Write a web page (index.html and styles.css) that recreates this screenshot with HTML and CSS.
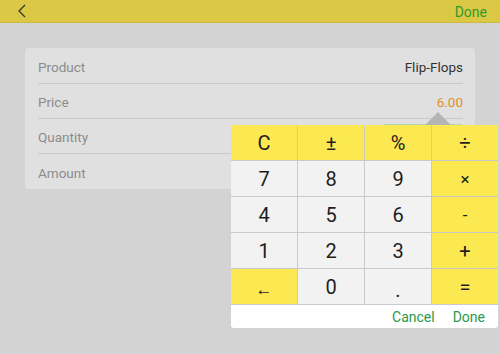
FILE: index.html
```html
<!DOCTYPE html>
<html>
  <head>
    <meta charset="utf-8" />
    <link rel="stylesheet" href="styles.css">
  </head>
  <body>
    <div class="header">
      <svg class="back" width="10" height="14" viewBox="0 0 10 14">
        <polyline points="8,1 2,7 8,13" fill="none" stroke="#333" stroke-width="1.3" />
      </svg>
      <div class="header-done">Done</div>
    </div>

    <div class="card">
      <div class="row">
        <span class="label">Product</span>
        <span class="value">Flip-Flops</span>
      </div>
      <div class="row">
        <span class="label">Price</span>
        <span class="value active">6.00</span>
      </div>
      <div class="row">
        <span class="label">Quantity</span>
        <span class="qty-field"></span>
      </div>
      <div class="row">
        <span class="label">Amount</span>
      </div>
    </div>

    <div class="calc-arrow"></div>
    <div class="calc">
      <div class="keys">
        <div class="key op">C</div>
        <div class="key op">±</div>
        <div class="key op">%</div>
        <div class="key op">÷</div>
        <div class="key">7</div>
        <div class="key">8</div>
        <div class="key">9</div>
        <div class="key op small">×</div>
        <div class="key">4</div>
        <div class="key">5</div>
        <div class="key">6</div>
        <div class="key op small">-</div>
        <div class="key">1</div>
        <div class="key">2</div>
        <div class="key">3</div>
        <div class="key op">+</div>
        <div class="key op small low">←</div>
        <div class="key">0</div>
        <div class="key low">.</div>
        <div class="key op">=</div>
      </div>
      <div class="calc-footer">
        <span class="calc-btn">Cancel</span>
        <span class="calc-btn">Done</span>
      </div>
    </div>
  </body>
</html>
```

FILE: styles.css
```css
body {
  margin: 0;
  width: 500px;
  height: 354px;
  background: #d3d3d3;
  font-family: Roboto, 'Noto Sans', sans-serif;
  position: relative;
  overflow: hidden;
}

.header {
  height: 22px;
  background: #dbc946;
  border-bottom: 1px solid #cbbb42;
  display: flex;
  justify-content: space-between;
  align-items: center;
  padding: 0 13px 0 17px;
}

.back {
  display: block;
}

.header-done {
  font-size: 14px;
  color: #2f9a2a;
  padding-top: 2px;
}

.card {
  margin: 25px 25px 0;
  background: #e0e0e0;
  border-radius: 4px;
  padding: 0 12px 0 13px;
}

.row {
  height: 35px;
  display: flex;
  justify-content: space-between;
  align-items: center;
  border-bottom: 1px solid #cacaca;
  font-size: 13.5px;
  box-sizing: border-box;
  padding-top: 2px;
}

.row:first-child {
  height: 36px;
}

.row:last-child {
  border-bottom: none;
}

.label {
  color: #8c8c8c;
}

.value {
  color: #333;
}

.value.active {
  color: #e3912a;
}

.qty-field {
  width: 80px;
  height: 24px;
  background: #b2d6b2;
  align-self: flex-end;
  margin-bottom: 5px;
  border-radius: 2px;
}

.calc-arrow {
  position: absolute;
  left: 425px;
  top: 112px;
  width: 0;
  height: 0;
  border-left: 13px solid transparent;
  border-right: 13px solid transparent;
  border-bottom: 13px solid #b5b5b5;
}

.calc {
  position: absolute;
  left: 231px;
  top: 125px;
  width: 267px;
  background: #fff;
  border-radius: 0 0 3px 3px;
  overflow: hidden;
}

.keys {
  display: grid;
  grid-template-columns: repeat(4, 1fr);
  grid-auto-rows: 35px;
  background: #c9c9c9;
  gap: 1px;
  border-bottom: 1px solid #c9c9c9;
}

.key {
  background: #f2f2f2;
  display: flex;
  align-items: center;
  justify-content: center;
  font-size: 20px;
  color: #1e1e1e;
}

.key.op {
  background: #fce850;
}

.key.small {
  font-size: 17px;
}

.key.low {
  padding-top: 6px;
}

.calc-footer {
  height: 23px;
  display: flex;
  justify-content: flex-end;
  align-items: center;
  gap: 18px;
  padding-right: 13px;
}

.calc-btn {
  font-size: 14px;
  color: #2a9a4a;
}
```
